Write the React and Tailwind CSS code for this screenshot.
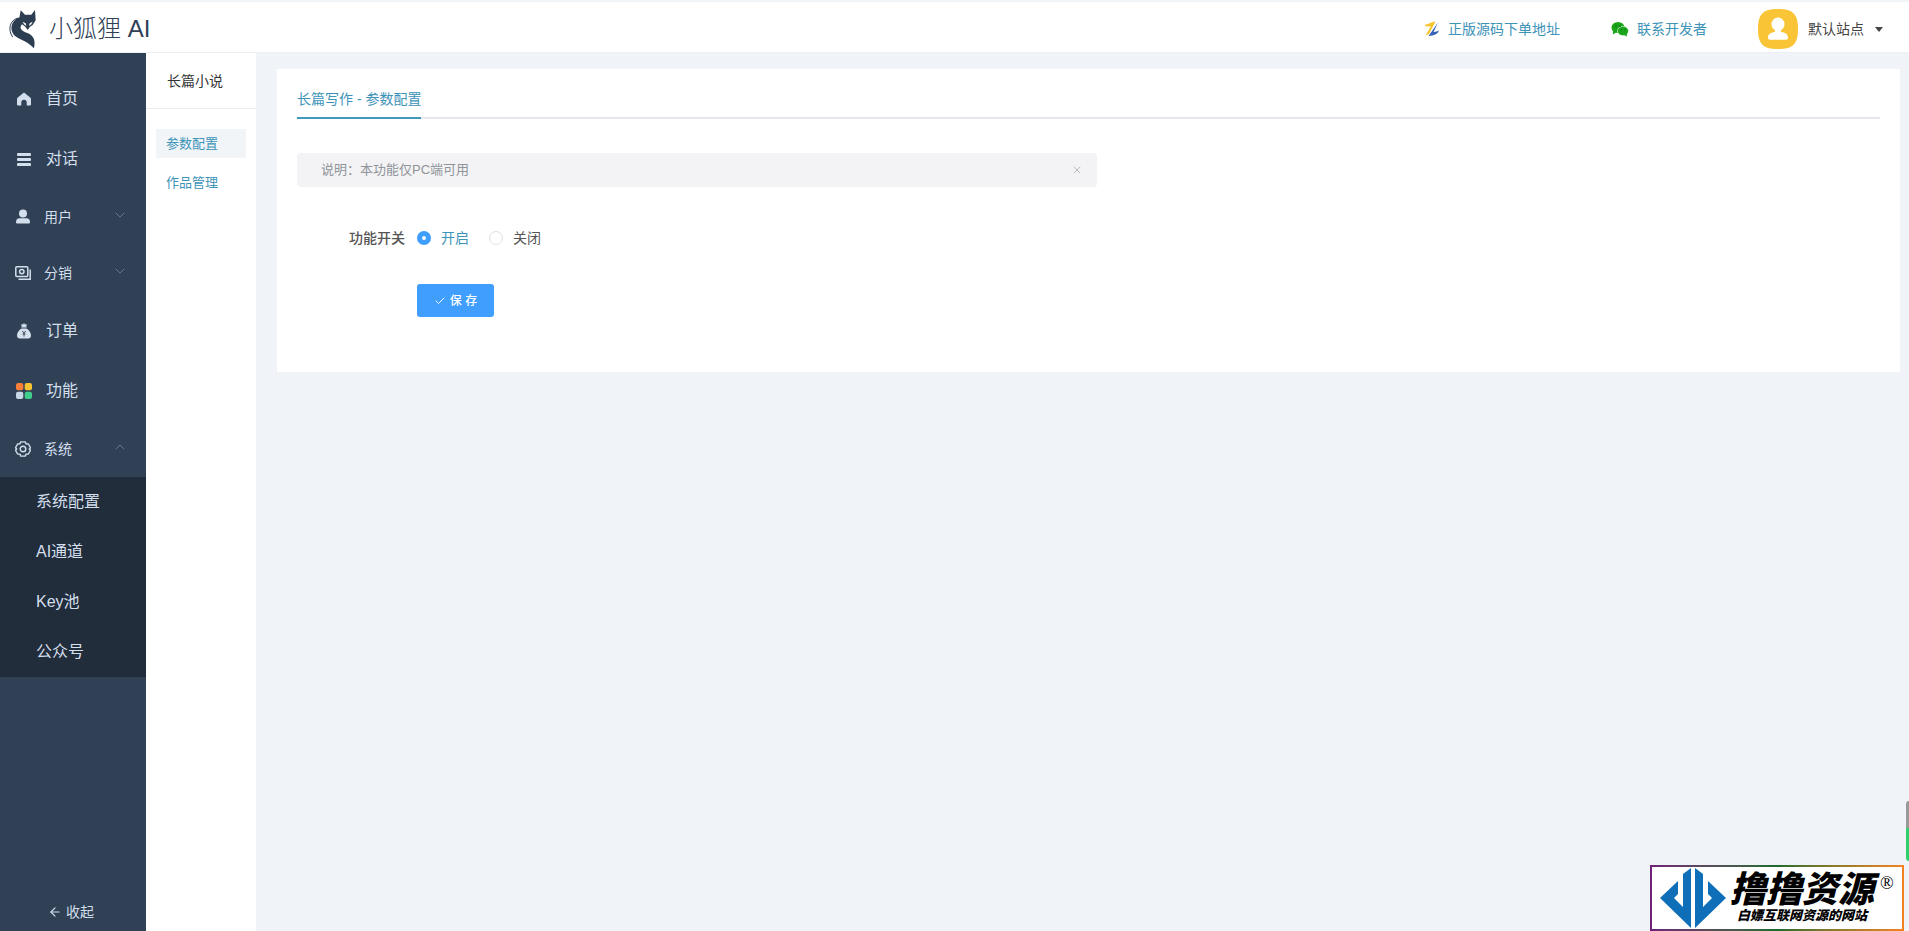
import { useState } from 'react';
import { ArrowLeft, Check, ChevronDown, ChevronUp, X } from 'lucide-react';

function FoxLogo() {
    return (
        <svg viewBox="17 14 84 120" className="h-10 w-7 text-[#2c3d52]" fill="currentColor">
            <path d="M52 18L65 31H84L95 17L97 48L88 62L80 67L73 77L66 67L56 60L48 42z" />
            <path d="M54 38C30 42 19 64 27 84C36 106 66 104 92 132C97 108 92 94 72 86C54 80 46 72 56 60z" />
            <path d="M45 41C20 46 12 76 28 98" fill="none" stroke="currentColor" strokeWidth="3" />
            <path d="M58 52l9 5 2 8-7-5zM88 52l-9 5-2 8 7-5z" fill="#fff" />
        </svg>
    );
}

function HomeIcon() {
    return (
        <svg viewBox="0 0 16 16" className="h-4 w-4" fill="currentColor">
            <path d="M8 1.500L1.800 6.500Q1 7.200 1 8v5.500q0 1 1 1h3.300V11.500a2.700 2.700 0 0 1 5.400 0v3H14q1 0 1-1V8q0-.8-.8-1.500z" />
        </svg>
    );
}

function ChatIcon() {
    return (
        <svg viewBox="0 0 16 16" className="h-4 w-4" fill="currentColor">
            <rect x="1" y="2" width="14" height="3" rx="1" />
            <rect x="1" y="7" width="14" height="3" rx="1" />
            <rect x="1" y="12" width="14" height="3" rx="1" />
        </svg>
    );
}

function UserIcon() {
    return (
        <svg viewBox="0 0 16 16" className="h-4 w-4" fill="currentColor">
            <circle cx="8" cy="4.500" r="4" />
            <path d="M4.500 9.300h7c2.200 0 3.500 1.500 3.500 3.700 0 1-.5 1.500-1.500 1.500h-11C1.500 14.500 1 14 1 13c0-2.200 1.300-3.700 3.500-3.700z" />
        </svg>
    );
}

function MoneyIcon() {
    return (
        <svg viewBox="0 0 16 16" className="h-4 w-4" fill="none" stroke="currentColor" strokeWidth="1.500">
            <rect x=".8" y="1.800" width="12" height="9.700" rx="1" />
            <circle cx="6.800" cy="6.600" r="2.200" />
            <path d="M3.500 14.200h11.700V4.500" />
        </svg>
    );
}

function BagIcon() {
    return (
        <svg viewBox="0 0 16 16" className="h-4 w-4">
            <path
                d="M8 0l1 1.500 2-.3-.8 2L11 4.500H5l.8-1.300-.8-2 2 .3zM5.500 5.500h5C13 7 15 9.500 15 12.300c0 2.200-1 3.200-3 3.200H4c-2 0-3-1-3-3.200C1 9.500 3 7 5.500 5.500z"
                fill="currentColor"
            />
            <path d="M6.300 8L8 10l1.700-2M8 10v3.500M6.500 11h3" fill="none" stroke="#304156" strokeWidth=".9" />
        </svg>
    );
}

function AppsIcon() {
    return (
        <svg viewBox="0 0 16 16" className="h-4 w-4">
            <rect x="0" y="0" width="7.300" height="7.300" rx="2" fill="#fa7f38" />
            <rect x="8.700" y="0" width="7.300" height="7.300" rx="2" fill="#f7c331" />
            <rect x="0" y="8.700" width="7.300" height="7.300" rx="2" fill="#c9d6e6" />
            <rect x="8.700" y="8.700" width="7.300" height="7.300" rx="2" fill="#3fce8c" />
        </svg>
    );
}

function SettingIcon() {
    return (
        <svg viewBox="0 0 16 16" className="h-4 w-4" fill="none" stroke="currentColor" strokeWidth="1.400">
            <path
                d="M5.800.9h4.400l.9 2 2.300.1 2.100 3.700L14.300 8l1.200 1.300-2.100 3.700-2.300.1-.9 2H5.800l-.9-2-2.300-.1L.5 9.300 1.700 8 .5 6.700 2.600 3l2.300-.1z"
                strokeLinejoin="round"
            />
            <circle cx="8" cy="8" r="2.800" />
        </svg>
    );
}

function ShopIcon() {
    return (
        <svg viewBox="0 0 16 16" className="h-4 w-4">
            <path d="M.5 3.500C4 4 6 1 11.500.5L5 13l-3.500 1.500L7 5C4.500 6 2 6 .5 3.500z" fill="#f6c52c" />
            <path d="M14 1.500L9.500 11c2.500 0 4-1 5.500-1.500-1.500 4-5 5-10.500 5.500z" fill="#3461b4" />
        </svg>
    );
}

function WechatIcon() {
    return (
        <svg viewBox="0 0 18 16" className="h-4 w-[18px]" fill="#1aa51a">
            <ellipse cx="7" cy="6.500" rx="6.500" ry="5.500" />
            <path d="M2 10l0 3.500 3-2z" />
            <ellipse cx="12" cy="10" rx="5.500" ry="4.700" stroke="#fff" strokeWidth=".6" />
            <path d="M13 14l3 1.500-.3-3z" />
            <g fill="#0b7a12">
                <circle cx="5" cy="5" r=".9" />
                <circle cx="9" cy="5" r=".9" />
                <circle cx="10.300" cy="8.800" r=".7" />
                <circle cx="13.700" cy="8.800" r=".7" />
            </g>
        </svg>
    );
}

function Avatar() {
    return (
        <svg viewBox="0 0 40 40" className="h-10 w-10">
            <path
                d="M20 0c15 0 20 5 20 20s-5 20-20 20S0 35 0 20 5 0 20 0z"
                fill="#f9c536"
            />
            <path
                d="M20 8.500a6.500 6.500 0 0 1 6.500 6.500c0 3-1.300 5-3.500 6v1.800c4 1 7 2 7 6 0 1.200-.5 2-2 2H12c-1.500 0-2-.8-2-2 0-4 3-5 7-6V21c-2.200-1-3.500-3-3.500-6A6.500 6.500 0 0 1 20 8.500z"
                fill="#fff"
            />
        </svg>
    );
}

function Header() {
    return (
        <header className="flex h-[53px] shrink-0 items-center justify-between border-t-2 border-b border-t-[#f1f5f8] border-b-[#eceff3] bg-white pt-1 pr-[26px] pl-[9px]">
            <div className="flex items-center gap-3">
                <FoxLogo />
                <h1 className="font-['Liberation_Sans','Noto_Sans_CJK_SC_Light','Noto_Sans_CJK_SC',sans-serif] text-2xl font-light whitespace-nowrap text-[#2f4056]">
                    小狐狸 AI
                </h1>
            </div>

            <div className="flex items-center text-sm text-[#3d93b8]">
                <a href="#source" className="mr-[51px] flex items-center gap-2">
                    <ShopIcon />
                    正版源码下单地址
                </a>
                <a href="#contact" className="mr-[51px] flex items-center gap-2">
                    <WechatIcon />
                    联系开发者
                </a>
                <button type="button" className="flex items-center gap-[10px] text-[#444]">
                    <Avatar />
                    默认站点
                    <svg viewBox="0 0 8 5" className="ml-px h-[5px] w-2" fill="currentColor">
                        <path d="M0 0h8L4 5z" />
                    </svg>
                </button>
            </div>
        </header>
    );
}

function MenuLink({ icon, label }) {
    return (
        <a href="#menu" className="flex h-[60px] items-center gap-[14px] pl-4 text-base">
            {icon}
            {label}
        </a>
    );
}

function MenuGroup({ icon, label, open, onToggle }) {
    const Arrow = open ? ChevronUp : ChevronDown;

    return (
        <button
            type="button"
            onClick={onToggle}
            aria-expanded={open}
            className="flex h-14 w-full items-center gap-3 pr-[18px] pl-[15px] text-sm"
        >
            {icon}
            <span className="flex-1 pl-px text-left">{label}</span>
            <Arrow className="mb-1 h-4 w-4 text-[#66788c]" strokeWidth={1.5} />
        </button>
    );
}

const systemItems = ['系统配置', 'AI通道', 'Key池', '公众号'];

function Sidebar() {
    const [systemOpen, setSystemOpen] = useState(true);

    return (
        <nav className="flex w-[146px] shrink-0 flex-col bg-[#304156] pt-4 text-[#d3dfec]">
            <MenuLink icon={<HomeIcon />} label="首页" />
            <MenuLink icon={<ChatIcon />} label="对话" />
            <MenuGroup icon={<UserIcon />} label="用户" />
            <MenuGroup icon={<MoneyIcon />} label="分销" />
            <MenuLink icon={<BagIcon />} label="订单" />
            <MenuLink icon={<AppsIcon />} label="功能" />
            <MenuGroup
                icon={<SettingIcon />}
                label="系统"
                open={systemOpen}
                onToggle={() => setSystemOpen(!systemOpen)}
            />
            {systemOpen && (
                <div className="bg-[#222d3c]">
                    {systemItems.map((item) => (
                        <a
                            key={item}
                            href="#system"
                            className="flex h-[50px] items-center pl-9 text-base"
                        >
                            {item}
                        </a>
                    ))}
                </div>
            )}
            <button
                type="button"
                className="mt-auto flex h-[38px] items-center justify-center gap-1 pr-1 text-sm"
            >
                <ArrowLeft className="h-[14px] w-[14px]" />
                收起
            </button>
        </nav>
    );
}

function SubNav() {
    return (
        <aside className="w-[110px] shrink-0 bg-white">
            <h2 className="flex h-14 items-center border-b border-[#e8ecf0] pt-px pl-[21px] text-sm text-[#333]">
                长篇小说
            </h2>
            <div className="flex flex-col gap-[10px] px-[10px] pt-5 text-[13px] text-[#3d93b8]">
                <a href="#config" className="flex h-[29px] items-center bg-[#f1f5f8] pl-[10px]">
                    参数配置
                </a>
                <a href="#works" className="flex h-[29px] items-center pl-[10px]">
                    作品管理
                </a>
            </div>
        </aside>
    );
}

function Radio({ label, value, current, onChange }) {
    return (
        <label
            className={
                value === current
                    ? 'flex items-center gap-[10px] text-[#3d93b8]'
                    : 'flex items-center gap-[10px] text-[#555]'
            }
        >
            <input
                type="radio"
                name="status"
                checked={value === current}
                onChange={() => onChange(value)}
                className="h-[14px] w-[14px] appearance-none rounded-full border border-[#dcdfe6] bg-white checked:border-[5px] checked:border-[#409eff]"
            />
            {label}
        </label>
    );
}

function SettingForm() {
    const [status, setStatus] = useState('on');

    return (
        <form onSubmit={(e) => e.preventDefault()} className="pt-[35px] text-sm">
            <fieldset className="flex h-8 items-center">
                <legend className="float-left w-[108px] text-right font-medium text-[#555]">
                    功能开关
                </legend>
                <div className="flex gap-5 pl-3">
                    <Radio label="开启" value="on" current={status} onChange={setStatus} />
                    <Radio label="关闭" value="off" current={status} onChange={setStatus} />
                </div>
            </fieldset>
            <button
                type="submit"
                className="mt-[30px] ml-[120px] flex h-[33px] w-[77px] items-center justify-center gap-1 rounded-[3px] bg-[#409eff] text-xs font-medium text-white"
            >
                <Check className="h-3 w-3" />
                保 存
            </button>
        </form>
    );
}

function Watermark() {
    return (
        <div className="fixed right-[5px] bottom-0 bg-linear-to-r from-[#6f2078] via-[#176b2c] to-[#f58220] p-[2px]">
            <div className="flex h-[62px] w-[250px] items-center bg-white pl-2">
                <svg viewBox="0 0 66 60" className="h-[60px] w-[66px] shrink-0" fill="#0e6fb8">
                    <path d="M0 30L18 13V26L14 30 23 39V6L31 0V60z" />
                    <path d="M66 30L48 13V26L52 30 43 39V6L35 0V60z" />
                </svg>
                <div className="flex flex-col items-center pt-1 pl-1 font-black text-black">
                    <span className="text-4xl leading-8 italic">撸撸资源</span>
                    <span className="text-[13px] leading-5 italic">白嫖互联网资源的网站</span>
                </div>
                <span className="self-start pt-1 pl-[6px] font-['Liberation_Serif',serif] text-lg leading-6 text-black">
                    ®
                </span>
            </div>
        </div>
    );
}

export default function App() {
    const [showTip, setShowTip] = useState(true);

    return (
        <div className="flex min-h-screen flex-col bg-[#f0f4f8] font-['Liberation_Sans','Noto_Sans_CJK_SC',sans-serif]">
            <Header />

            <div className="flex flex-1">
                <Sidebar />
                <SubNav />

                <main className="min-w-0 flex-1 pt-4 pr-[9px] pl-[21px]">
                    <section className="min-h-[303px] bg-white px-5 pt-4">
                        <div className="flex border-b-2 border-[#e4e7ed]">
                            <a
                                href="#config"
                                className="-mb-[2px] h-[34px] border-b-2 border-[#4299b8] pt-1 text-sm text-[#3d93b8]"
                            >
                                长篇写作 - 参数配置
                            </a>
                        </div>

                        {showTip && (
                            <div className="mt-[34px] flex h-[34px] w-[800px] max-w-full items-center justify-between rounded-sm bg-[#f3f3f5] pr-[14px] pl-6 text-[13px] text-[#909399]">
                                <p>说明：本功能仅PC端可用</p>
                                <button
                                    type="button"
                                    aria-label="关闭说明"
                                    onClick={() => setShowTip(false)}
                                >
                                    <X className="h-3 w-3 text-[#b8bbc2]" />
                                </button>
                            </div>
                        )}

                        <SettingForm />
                    </section>
                </main>
            </div>

            <div className="fixed right-0 bottom-[70px] h-[60px] w-[3px] rounded-l-sm bg-linear-to-b from-[#999] from-45% to-[#2fcf6b] to-45%"></div>
            <Watermark />
        </div>
    );
}
